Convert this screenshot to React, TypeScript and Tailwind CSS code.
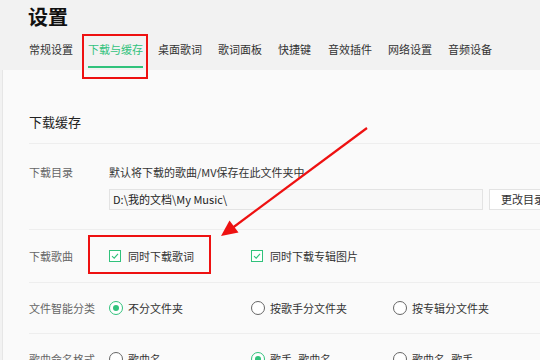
import React from "react";

const tabs: { label: string; w: string; active?: boolean }[] = [
  { label: "常规设置", w: "w-[59px]" },
  { label: "下载与缓存", w: "w-[70px]", active: true },
  { label: "桌面歌词", w: "w-[60px]" },
  { label: "歌词面板", w: "w-[60px]" },
  { label: "快捷键", w: "w-[50px]" },
  { label: "音效插件", w: "w-[60px]" },
  { label: "网络设置", w: "w-[60px]" },
  { label: "音频设备", w: "w-[60px]" },
];

function Check({ label }: { label: string }) {
  return (
    <div className="flex items-center gap-[7px] w-[142px] shrink-0">
      <span className="w-[12px] h-[12px] border border-[#31c27c] bg-white flex items-center justify-center">
        <svg width="8" height="8" viewBox="0 0 8 8">
          <path d="M1 4.2 L3.2 6.2 L7 1.8" fill="none" stroke="#31c27c" strokeWidth="1.1" />
        </svg>
      </span>
      <span className="text-[11px] text-[#333]">{label}</span>
    </div>
  );
}

function Radio({ label, on }: { label: string; on?: boolean }) {
  return (
    <div className="flex items-center gap-[5px] w-[142px] shrink-0">
      <span
        className={
          on
            ? "w-[14px] h-[14px] rounded-full border border-[#31c27c] bg-white flex items-center justify-center"
            : "w-[14px] h-[14px] rounded-full border border-[#666] bg-white"
        }
      >
        {on && <span className="w-[6px] h-[6px] rounded-full bg-[#31c27c]" />}
      </span>
      <span className="text-[11px] text-[#333]">{label}</span>
    </div>
  );
}

export default function App() {
  return (
    <div className="relative w-[540px] h-[360px] overflow-hidden bg-[#f2f2f2] font-['Microsoft_YaHei','Noto_Sans_CJK_SC',sans-serif]">
      <div className="h-[70px] pl-[28px] flex flex-col">
        <div className="pt-[3px] h-[31px] text-[20px] leading-[28px] font-bold text-[#111]">设置</div>
        <div className="flex mt-[10px] ml-[1px]">
          {tabs.map((t) => (
            <div key={t.label} className={t.w + " flex flex-col shrink-0"}>
              <span
                className={
                  t.active
                    ? "self-start text-[11px] leading-[16px] text-[#31c27c] border-b-2 border-[#31c27c] pb-[9px]"
                    : "self-start text-[11px] leading-[16px] text-[#333] pb-[11px]"
                }
              >
                {t.label}
              </span>
            </div>
          ))}
        </div>
      </div>
      <div className="ml-[2px] h-[290px] bg-[#fafafa] border-l border-[#e6e6e6] pl-[26px]">
        <div className="pt-[43px] pb-[12px] text-[13px] leading-[18px] text-[#222] border-b border-[#eeeeee]">下载缓存</div>
        <div className="flex pt-[20px] pb-[19px] border-b border-[#eeeeee]">
          <div className="w-[80px] shrink-0 text-[11px] leading-[16px] text-[#666]">下载目录</div>
          <div className="flex flex-col flex-1">
            <div className="text-[11px] leading-[16px] text-[#333] whitespace-nowrap">默认将下载的歌曲/MV保存在此文件夹中</div>
            <div className="flex mt-[9px] gap-[6px]">
              <div className="w-[374px] shrink-0 h-[21px] border border-[#e3e3e3] bg-[#f8f8f8] text-[11px] leading-[19px] pl-[3px] text-[#222]">
                D:\我的文档\My Music\
              </div>
              <div className="w-[70px] shrink-0 h-[21px] border border-[#e3e3e3] bg-white text-[11px] leading-[19px] pl-[11px] text-[#333] whitespace-nowrap">
                更改目录
              </div>
            </div>
          </div>
        </div>
        <div className="flex items-center h-[53px] border-b border-[#eeeeee]">
          <div className="w-[80px] shrink-0 text-[11px] text-[#666]">下载歌曲</div>
          <Check label="同时下载歌词" />
          <Check label="同时下载专辑图片" />
        </div>
        <div className="flex items-center h-[51px] border-b border-[#eeeeee]">
          <div className="w-[80px] shrink-0 text-[11px] text-[#666]">文件智能分类</div>
          <Radio label="不分文件夹" on />
          <Radio label="按歌手分文件夹" />
          <Radio label="按专辑分文件夹" />
        </div>
        <div className="flex items-center h-[50px]">
          <div className="w-[80px] shrink-0 text-[11px] text-[#666]">歌曲命名格式</div>
          <Radio label="歌曲名" />
          <Radio label="歌手_歌曲名" on />
          <Radio label="歌曲名_歌手" />
        </div>
      </div>

      <div className="absolute left-[82px] top-[34px] w-[66px] h-[45px] border-2 border-[#ee1111]" />
      <div className="absolute left-[88px] top-[235px] w-[123px] h-[39px] border-2 border-[#ee1111]" />
      <svg className="absolute left-0 top-0" width="540" height="360" viewBox="0 0 540 360">
        <line x1="367" y1="128" x2="231" y2="229" stroke="#ee1111" strokeWidth="2.2" />
        <polygon points="221,236 238.5,232.5 229.5,220.5" fill="#ee1111" />
      </svg>
    </div>
  );
}
